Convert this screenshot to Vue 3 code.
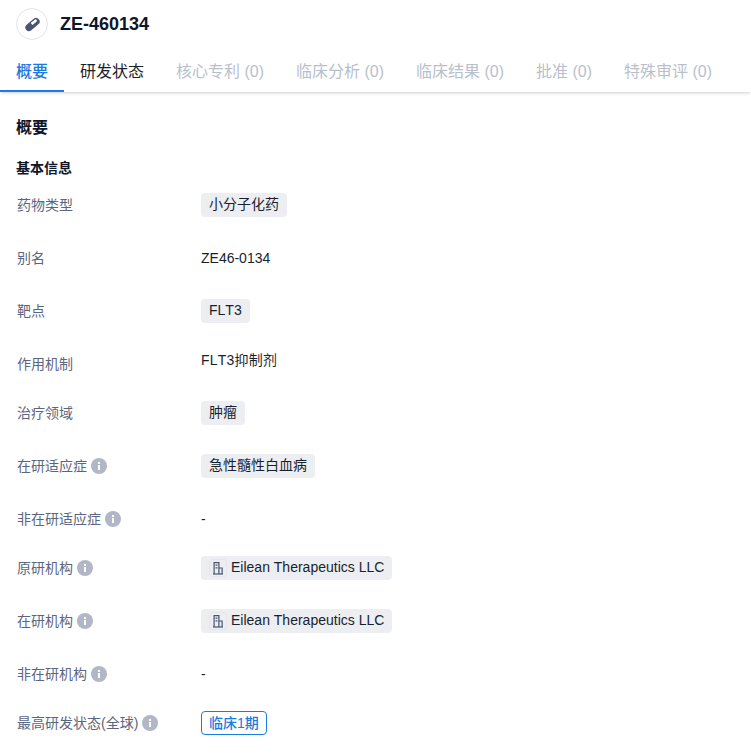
<script setup>
const rows = [
  { label: '药物类型', type: 'tag', value: '小分子化药' },
  { label: '别名', type: 'text', value: 'ZE46-0134' },
  { label: '靶点', type: 'tag', value: 'FLT3' },
  { label: '作用机制', type: 'plain', value: 'FLT3抑制剂' },
  { label: '治疗领域', type: 'tag', value: '肿瘤' },
  { label: '在研适应症', info: true, type: 'tag', value: '急性髓性白血病' },
  { label: '非在研适应症', info: true, type: 'dash', value: '-' },
  { label: '原研机构', info: true, type: 'org', value: 'Eilean Therapeutics LLC' },
  { label: '在研机构', info: true, type: 'org', value: 'Eilean Therapeutics LLC' },
  { label: '非在研机构', info: true, type: 'dash', value: '-' },
  { label: '最高研发状态(全球)', info: true, type: 'status', value: '临床1期' }
]
const tabs = [
  { name: '概要', active: true },
  { name: '研发状态', strong: true },
  { name: '核心专利 (0)' },
  { name: '临床分析 (0)' },
  { name: '临床结果 (0)' },
  { name: '批准 (0)' },
  { name: '特殊审评 (0)' }
]
</script>

<template>
  <div class="page">
    <header class="head">
      <span class="logo">
        <svg width="19" height="19" viewBox="0 0 22 22">
          <g transform="rotate(-40 11 11)">
            <rect x="1.5" y="6.8" width="19" height="8.4" rx="4.2" fill="#4a5572" />
            <path d="M10.5 8.3h6a1.6 1.6 0 0 1 0 3.2h-6z" fill="#fff" />
          </g>
        </svg>
      </span>
      <h1 class="title">ZE-460134</h1>
    </header>
    <nav class="tabs">
      <div v-for="t in tabs" :key="t.name" class="tab" :class="{ active: t.active, strong: t.strong }">{{ t.name }}</div>
    </nav>
    <main class="body">
      <h2 class="h2">概要</h2>
      <h3 class="h3">基本信息</h3>
      <div class="rows">
        <div v-for="r in rows" :key="r.label" class="row" :class="{ short: r.type === 'plain' || r.type === 'dash' }">
          <div class="label">
            <span class="label-text">{{ r.label }}</span>
            <svg v-if="r.info" class="info" width="16" height="16" viewBox="0 0 16 16">
              <circle cx="8" cy="8" r="8" fill="#b1b7c6" />
              <rect x="7" y="7" width="2" height="5" fill="#fff" />
              <rect x="7" y="4" width="2" height="2" fill="#fff" />
            </svg>
          </div>
          <div class="value">
            <span v-if="r.type === 'tag'" class="tag"><span class="tag-text">{{ r.value }}</span></span>
            <span v-else-if="r.type === 'text' || r.type === 'dash'" class="text">{{ r.value }}</span>
            <span v-else-if="r.type === 'plain'" class="plain">{{ r.value }}</span>
            <span v-else-if="r.type === 'status'" class="status">{{ r.value }}</span>
            <span v-else class="tag org">
              <span class="org-icon">
                <svg width="12" height="14" viewBox="0 0 12 14" fill="none" stroke="#4a5572" stroke-width="1.2">
                  <path d="M2.1 13V1.6h4.8V13" />
                  <path d="M6.9 7h3.2v6" />
                  <path d="M1 13h10" />
                  <path d="M3.5 4.2h2M3.5 6.8h2" />
                </svg>
              </span>
              <span class="tag-text">{{ r.value }}</span>
            </span>
          </div>
        </div>
      </div>
    </main>
  </div>
</template>

<style scoped>
.page {
  width: 751px;
  height: 756px;
  overflow: hidden;
  background: #fff;
  font-family: "Liberation Sans", "Noto Sans CJK SC", sans-serif;
  font-kerning: none;
  color: #0f1629;
}
.head {
  display: flex;
  align-items: center;
  gap: 12px;
  padding: 8px 16px 0;
}
.logo {
  width: 32px;
  height: 32px;
  box-sizing: border-box;
  border: 1px solid #e1e4eb;
  border-radius: 50%;
  display: flex;
  align-items: center;
  justify-content: center;
}
.title {
  margin: 0;
  font-size: 18px;
  font-weight: 700;
  line-height: 32px;
}
.tabs {
  display: flex;
  height: 52px;
  box-sizing: border-box;
  box-shadow: 0 2px 3px -1px rgba(30, 40, 70, 0.22);
}
.tab {
  padding: 0 16px;
  font-size: 16px;
  line-height: 64px;
  height: 52px;
  box-sizing: border-box;
  color: #b8bfcc;
  white-space: nowrap;
}
.tab.strong {
  color: #1a1f2e;
}
.tab.active {
  color: #1a7be0;
  font-weight: 500;
  border-bottom: 2px solid #1a7be0;
}
.body {
  padding: 0 16px;
}
.h2 {
  margin: 24px 0 0;
  font-size: 16px;
  font-weight: 700;
  line-height: 24px;
}
.h3 {
  margin: 18px 0 0;
  font-size: 14px;
  font-weight: 700;
  line-height: 20px;
}
.rows {
  margin-top: 15px;
  display: flex;
  flex-direction: column;
  gap: 29px;
}
.row {
  display: grid;
  grid-template-columns: 185px 1fr;
  height: 24px;
}
.row.short {
  height: 20px;
}
.label {
  display: flex;
  align-items: center;
  gap: 4px;
  height: 24px;
  padding-left: 1px;
  font-size: 14px;
  color: #5a6680;
  white-space: nowrap;
}
.label-text {
  margin-top: -2px;
}
.info {
  flex: none;
}
.value {
  font-size: 14px;
  color: #1a1f2e;
}
.tag {
  display: inline-flex;
  align-items: center;
  height: 24px;
  padding: 0 8px;
  border-radius: 4px;
  background: #eceef2;
  line-height: 20px;
}
.tag-text {
  margin-top: -2px;
}
.org-icon {
  width: 18px;
  height: 18px;
  box-sizing: border-box;
  border: 1px solid #e4e6ec;
  border-radius: 3px;
  margin-right: 4px;
  display: flex;
  align-items: center;
  justify-content: center;
}
.text {
  display: block;
  line-height: 24px;
}
.plain {
  display: block;
  line-height: 16px;
  letter-spacing: 0.2px;
}
.status {
  display: inline-block;
  height: 24px;
  box-sizing: border-box;
  padding: 0 7px;
  border: 1px solid #1a7be0;
  border-radius: 4px;
  line-height: 22px;
  color: #1a7be0;
  font-weight: 500;
}
</style>
